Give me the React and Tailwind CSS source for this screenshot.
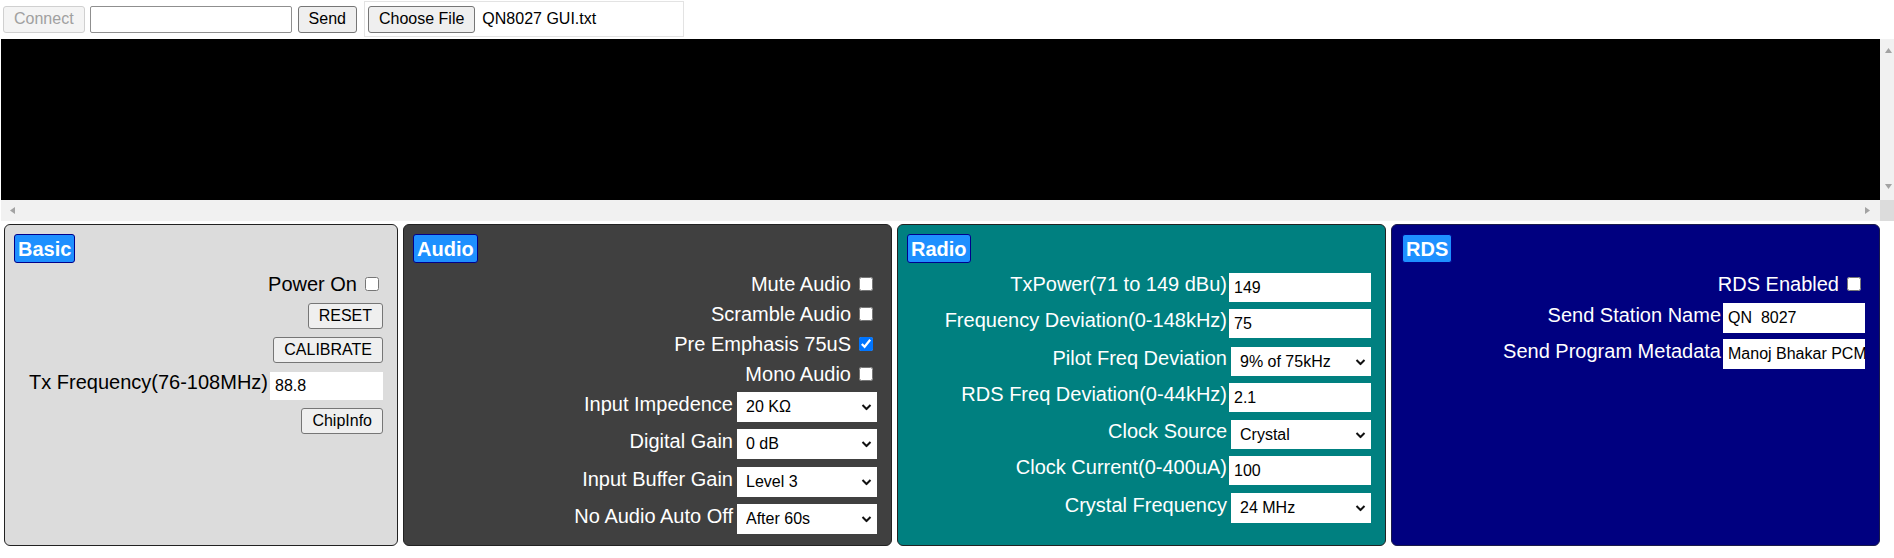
import React from 'react'

const btn =
  'h-[26px] px-[10px] text-[16px] leading-none text-black bg-[#efefef] border border-[#767676] rounded-[3px]'

const Badge = ({ children }) => (
  <div className="shrink-0 self-start h-[29px] px-[3px] flex items-center bg-[#1e90ff] border border-[#00008b] rounded-[3px] text-white font-bold text-[20px] leading-none">
    {children}
  </div>
)

const Check = ({ label, checked, className }) => (
  <label className={`shrink-0 h-[22px] flex items-center text-[20px] leading-[22px] ${className}`}>
    {label}
    <input type="checkbox" defaultChecked={checked} className="ml-[8px] mr-[4px] w-[14px] h-[14px]" />
  </label>
)

const Field = ({ label, value, width, height, className }) => (
  <div className={`shrink-0 flex items-center ${className}`}>
    <span className="text-[20px] leading-[22px] pb-[7px] whitespace-nowrap">{label}</span>
    <input
      defaultValue={value}
      className={`ml-[2px] ${width} ${height} bg-white text-black text-[16px] leading-none pl-[5px] outline-none`}
    />
  </div>
)

const Choice = ({ label, value, options, height, className }) => (
  <div className={`shrink-0 flex items-center ${className}`}>
    <span className="text-[20px] leading-[22px] pb-[7px] whitespace-nowrap">{label}</span>
    <div className="relative ml-[4px] flex">
      <select
        defaultValue={value}
        className={`appearance-none w-[140px] ${height} bg-white text-black text-[16px] leading-none pl-[9px] outline-none`}
      >
        {options.map(o => <option key={o}>{o}</option>)}
      </select>
      <svg className="pointer-events-none absolute right-[5px] top-1/2 -translate-y-1/2" width="11" height="7" viewBox="0 0 11 7">
        <path d="M1.5 1.5l4 4 4-4" fill="none" stroke="#111" strokeWidth="2" />
      </svg>
    </div>
  </div>
)

const Arrow = ({ dir }) => {
  const d = {
    up: 'M0 5L3.5 0L7 5Z',
    down: 'M0 0L3.5 5L7 0Z',
    left: 'M5 0L0 3.5L5 7Z',
    right: 'M0 0L5 3.5L0 7Z',
  }[dir]
  const vertical = dir === 'up' || dir === 'down'
  return (
    <svg width={vertical ? 7 : 5} height={vertical ? 5 : 7} viewBox={vertical ? '0 0 7 5' : '0 0 5 7'}>
      <path d={d} fill="#a3a3a3" />
    </svg>
  )
}

export default function App() {
  return (
    <div className="w-full overflow-hidden bg-white font-['Liberation_Sans',Arial,sans-serif]">
      {/* connection bar */}
      <div className="h-[38px] flex items-center text-[16px]">
        <button disabled className="ml-[3px] h-[27px] px-[10px] leading-none text-[#a0a0a0] bg-[#f4f4f4] border border-[#d0d0d0] rounded-[3px]">
          Connect
        </button>
        <input className="ml-[5px] w-[202px] h-[27px] border border-[#8f8f8f] rounded-[2px] px-[3px] outline-none" />
        <button className="ml-[6px] h-[27px] px-[10px] leading-none bg-[#efefef] border border-[#767676] rounded-[3px]">
          Send
        </button>
        <div className="ml-[7px] h-[36px] w-[320px] border border-[#e3e3e3] flex items-center pl-[3px]">
          <button className="h-[27px] px-[10px] leading-none bg-[#efefef] border border-[#767676] rounded-[3px]">
            Choose File
          </button>
          <span className="ml-[7px] whitespace-nowrap">QN8027 GUI.txt</span>
        </div>
      </div>

      {/* console */}
      <div className="mt-[1px] ml-[1px] w-[1896px] flex flex-col">
        <div className="flex h-[161px]">
          <textarea readOnly className="w-[1879px] h-full bg-black text-white resize-none outline-none" />
          <div className="w-[17px] bg-[#f1f1f1] flex flex-col items-center pt-[9px] pb-[11px] justify-between">
            <Arrow dir="up" />
            <Arrow dir="down" />
          </div>
        </div>
        <div className="flex h-[21px]">
          <div className="w-[1879px] bg-[#f1f1f1] flex items-center justify-between pl-[9px] pr-[10px]">
            <Arrow dir="left" />
            <Arrow dir="right" />
          </div>
          <div className="w-[17px] bg-[#dcdcdc]" />
        </div>
      </div>

      {/* panels */}
      <div className="mt-[3px] pl-[4px] flex gap-[5px]">
        <div className="w-[394px] h-[322px] bg-[#dcdcdc] text-black border border-[#222] rounded-[6px] pl-[9px] pr-[14px] pt-[9px] flex flex-col">
          <Badge>Basic</Badge>
          <div className="mt-[10px] flex flex-col items-end gap-[8px]">
            <Check label="Power On" />
            <button className={btn}>RESET</button>
            <button className={btn}>CALIBRATE</button>
            <Field label="Tx Frequency(76-108MHz)" value="88.8" width="w-[113px]" height="h-[28px]" />
            <button className={btn}>ChipInfo</button>
          </div>
        </div>

        <div className="w-[489px] h-[322px] bg-[#404040] text-white border border-[#222] rounded-[6px] pl-[9px] pr-[14px] pt-[9px] flex flex-col">
          <Badge>Audio</Badge>
          <div className="flex flex-col items-end">
            <Check label="Mute Audio" className="mt-[10px]" />
            <Check label="Scramble Audio" className="mt-[8px]" />
            <Check label="Pre Emphasis 75uS" checked className="mt-[8px]" />
            <Check label="Mono Audio" className="mt-[8px]" />
            <Choice label="Input Impedence" value="20 KΩ" options={['10 KΩ', '20 KΩ', '40 KΩ', '80 KΩ']} height="h-[30px]" className="mt-[7px]" />
            <Choice label="Digital Gain" value="0 dB" options={['0 dB', '1 dB', '2 dB']} height="h-[30px]" className="mt-[7px]" />
            <Choice label="Input Buffer Gain" value="Level 3" options={['Level 0', 'Level 1', 'Level 2', 'Level 3', 'Level 4', 'Level 5']} height="h-[30px]" className="mt-[8px]" />
            <Choice label="No Audio Auto Off" value="After 60s" options={['Never', 'After 58s', 'After 59s', 'After 60s']} height="h-[30px]" className="mt-[7px]" />
          </div>
        </div>

        <div className="w-[489px] h-[322px] bg-[#008080] text-white border border-[#222] rounded-[6px] pl-[9px] pr-[14px] pt-[9px] flex flex-col">
          <Badge>Radio</Badge>
          <div className="flex flex-col items-end">
            <Field label="TxPower(71 to 149 dBu)" value="149" width="w-[142px]" height="h-[29px]" className="mt-[10px]" />
            <Field label="Frequency Deviation(0-148kHz)" value="75" width="w-[142px]" height="h-[29px]" className="mt-[7px]" />
            <Choice label="Pilot Freq Deviation" value="9% of 75kHz" options={['8% of 75kHz', '9% of 75kHz', '10% of 75kHz']} height="h-[29px]" className="mt-[9px]" />
            <Field label="RDS Freq Deviation(0-44kHz)" value="2.1" width="w-[142px]" height="h-[29px]" className="mt-[7px]" />
            <Choice label="Clock Source" value="Crystal" options={['Crystal', 'External']} height="h-[29px]" className="mt-[8px]" />
            <Field label="Clock Current(0-400uA)" value="100" width="w-[142px]" height="h-[29px]" className="mt-[7px]" />
            <Choice label="Crystal Frequency" value="24 MHz" options={['12 MHz', '24 MHz']} height="h-[30px]" className="mt-[8px]" />
          </div>
        </div>

        <div className="w-[489px] h-[322px] bg-[#000080] text-white border border-[#1a1a4a] rounded-[6px] pl-[10px] pr-[14px] pt-[9px] flex flex-col">
          <Badge>RDS</Badge>
          <div className="flex flex-col items-end">
            <Check label="RDS Enabled" className="mt-[10px]" />
            <Field label="Send Station Name" value="QN  8027" width="w-[142px]" height="h-[30px]" className="mt-[8px]" />
            <Field label="Send Program Metadata" value="Manoj Bhakar PCM Radio" width="w-[142px]" height="h-[30px]" className="mt-[6px]" />
          </div>
        </div>
      </div>
    </div>
  )
}
